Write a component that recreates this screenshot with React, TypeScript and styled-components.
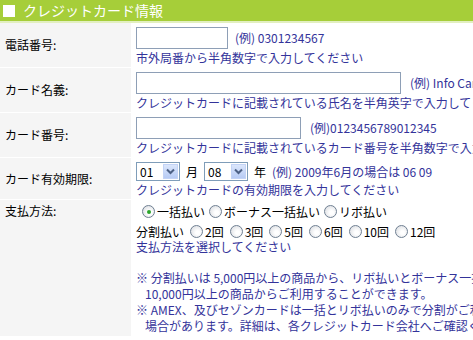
import React from "react";
import styled, { createGlobalStyle } from "styled-components";

const Global = createGlobalStyle`
  html, body { margin: 0; padding: 0; background: #fff; overflow: hidden; }
  body { font-family: "Noto Sans CJK JP", "DejaVu Sans", sans-serif; font-size: 12px; color: #000; }
`;

const Page = styled.div`
  width: 620px;
`;

const Header = styled.div`
  height: 21px;
  background: #a6ce39;
  border-bottom: 2px solid #e2efc0;
  display: flex;
  align-items: center;
  gap: 8px;
  padding-left: 3px;
  color: #fff;
  font-size: 14px;
  line-height: 21px;
`;

const Square = styled.span`
  width: 12px;
  height: 12px;
  background: #fff;
  display: inline-block;
`;

const Table = styled.div`
  display: grid;
  grid-template-columns: 131px 1fr;
  row-gap: 1px;
  background: #fff;
`;

const Label = styled.div<{ $top?: boolean }>`
  background: #f5f5f5;
  display: flex;
  align-items: ${(p) => (p.$top ? "flex-start" : "center")};
  padding-left: 5px;
  padding-top: ${(p) => (p.$top ? "3px" : "0")};
  font-size: 12px;
  line-height: 16px;
`;

const Field = styled.div`
  padding: 4px 0 2px 5px;
  display: flex;
  flex-direction: column;
`;

const Line = styled.div<{ $gap?: number; $mt?: number }>`
  display: flex;
  align-items: center;
  gap: ${(p) => p.$gap ?? 7}px;
  margin-top: ${(p) => p.$mt ?? 0}px;
  white-space: nowrap;
`;

const TextInput = styled.div<{ $w: number }>`
  width: ${(p) => p.$w}px;
  height: 20px;
  border: 1px solid #8e9fb6;
  background: #fff;
  flex: none;
`;

const Example = styled.span`
  color: #33339a;
  font-size: 12px;
  line-height: 16px;
`;

const Hint = styled.div<{ $mt?: number }>`
  color: #33339a;
  font-size: 12px;
  line-height: 15px;
  white-space: nowrap;
  margin-top: ${(p) => p.$mt ?? 1}px;
`;

const Select = styled.div`
  width: 39px;
  height: 17px;
  border: 1px solid #7f9db9;
  display: flex;
  align-items: center;
  justify-content: space-between;
  padding-left: 3px;
  box-sizing: content-box;
  font-size: 12px;
  background: #fff;
  flex: none;
`;

const Arrow = styled.span`
  width: 15px;
  height: 15px;
  margin-right: 1px;
  background: linear-gradient(#dbe6fb, #b7cbf5);
  border: 1px solid #c3d3f6;
  box-sizing: border-box;
  display: flex;
  align-items: center;
  justify-content: center;
`;

const Word = styled.span`
  font-size: 12px;
  line-height: 15px;
`;

const Spacer = styled.span`
  width: 2px;
`;

const RadioItem = styled.label`
  display: inline-flex;
  align-items: center;
  gap: 2px;
  font-size: 12px;
  line-height: 15px;
`;

const Circle = styled.span<{ $on?: boolean }>`
  width: 11px;
  height: 11px;
  border-radius: 50%;
  border: 1px solid #6f7f92;
  background: radial-gradient(circle at 60% 60%, #ffffff 20%, #d4d7dc 100%);
  display: inline-flex;
  align-items: center;
  justify-content: center;
  flex: none;
  &::after {
    content: "";
    width: 4px;
    height: 4px;
    border-radius: 50%;
    background: ${(p) => (p.$on ? "#2aa52a" : "transparent")};
  }
`;

const Notes = styled.div`
  margin-top: 16px;
  color: #33339a;
  font-size: 12px;
  line-height: 16px;
  white-space: nowrap;
`;

const Indent = styled.div`
  padding-left: 9px;
`;

const Chevron = () => (
  <svg width="9" height="7" viewBox="0 0 9 7">
    <path d="M1 1.5 L4.5 5 L8 1.5" fill="none" stroke="#4d6185" strokeWidth="2" />
  </svg>
);

const Sel = ({ v }: { v: string }) => (
  <Select>
    {v}
    <Arrow>
      <Chevron />
    </Arrow>
  </Select>
);

const Radio = ({ on, children }: { on?: boolean; children: React.ReactNode }) => (
  <RadioItem>
    <Circle $on={on} />
    {children}
  </RadioItem>
);

export default function App() {
  return (
    <Page>
      <Global />
      <Header>
        <Square />
        クレジットカード情報
      </Header>
      <Table>
        <Label>電話番号:</Label>
        <Field>
          <Line>
            <TextInput $w={90} />
            <Example>(例) 0301234567</Example>
          </Line>
          <Hint>市外局番から半角数字で入力してください</Hint>
        </Field>

        <Label>カード名義:</Label>
        <Field>
          <Line $gap={9}>
            <TextInput $w={263} />
            <Example>(例) Info Card</Example>
          </Line>
          <Hint>クレジットカードに記載されている氏名を半角英字で入力してください</Hint>
        </Field>

        <Label>カード番号:</Label>
        <Field>
          <Line $gap={9}>
            <TextInput $w={163} />
            <Example>(例)0123456789012345</Example>
          </Line>
          <Hint>クレジットカードに記載されているカード番号を半角数字で入力してください</Hint>
        </Field>

        <Label>カード有効期限:</Label>
        <Field>
          <Line $gap={6}>
            <Sel v="01" />
            <Word>月</Word>
            <Sel v="08" />
            <Word>年</Word>
            <Example>(例) 2009年6月の場合は 06 09</Example>
          </Line>
          <Hint>クレジットカードの有効期限を入力してください</Hint>
        </Field>

        <Label $top>支払方法:</Label>
        <Field>
          <Line $gap={4}>
            <Spacer />
            <Radio on>一括払い</Radio>
            <Radio>ボーナス一括払い</Radio>
            <Radio>リボ払い</Radio>
          </Line>
          <Line $gap={6} $mt={5}>
            <Word>分割払い</Word>
            <Radio>2回</Radio>
            <Radio>3回</Radio>
            <Radio>5回</Radio>
            <Radio>6回</Radio>
            <Radio>10回</Radio>
            <Radio>12回</Radio>
          </Line>
          <Hint $mt={0}>支払方法を選択してください</Hint>
          <Notes>
            <div>※ 分割払いは 5,000円以上の商品から、リボ払いとボーナス一括払いは</div>
            <Indent>10,000円以上の商品からご利用することができます。</Indent>
            <div>※ AMEX、及びセゾンカードは一括とリボ払いのみで分割がご利用になれない</div>
            <Indent>場合があります。詳細は、各クレジットカード会社へご確認ください。</Indent>
          </Notes>
        </Field>
      </Table>
    </Page>
  );
}
